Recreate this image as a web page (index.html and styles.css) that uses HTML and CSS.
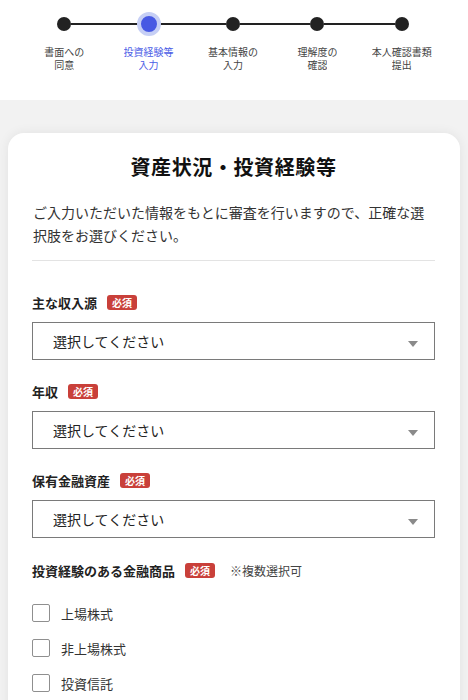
FILE: index.html
```html
<!DOCTYPE html>
<html lang="ja">
<head>
<meta charset="utf-8">
<title>資産状況・投資経験等</title>
<link rel="stylesheet" href="styles.css">
</head>
<body>
<header class="stepper">
  <div class="step">
    <div class="track"><span class="seg seg-none"></span><span class="dot"></span><span class="seg"></span></div>
    <div class="step-label"><span class="ln">書面への</span><span class="ln">同意</span></div>
  </div>
  <div class="step step-active">
    <div class="track"><span class="seg"></span><span class="dot"></span><span class="seg"></span></div>
    <div class="step-label"><span class="ln">投資経験等</span><span class="ln">入力</span></div>
  </div>
  <div class="step">
    <div class="track"><span class="seg"></span><span class="dot"></span><span class="seg"></span></div>
    <div class="step-label"><span class="ln">基本情報の</span><span class="ln">入力</span></div>
  </div>
  <div class="step">
    <div class="track"><span class="seg"></span><span class="dot"></span><span class="seg"></span></div>
    <div class="step-label"><span class="ln">理解度の</span><span class="ln">確認</span></div>
  </div>
  <div class="step">
    <div class="track"><span class="seg"></span><span class="dot"></span><span class="seg seg-none"></span></div>
    <div class="step-label"><span class="ln">本人確認書類</span><span class="ln">提出</span></div>
  </div>
</header>
<main class="page">
  <section class="card">
    <h1 class="title">資産状況・投資経験等</h1>
    <p class="lead">ご入力いただいた情報をもとに審査を行いますので、正確な選択肢をお選びください。</p>
    <hr class="divider">

    <div class="field">
      <div class="field-label">主な収入源<span class="badge">必須</span></div>
      <div class="select"><span>選択してください</span><span class="arrow"></span></div>
    </div>
    <div class="field">
      <div class="field-label">年収<span class="badge">必須</span></div>
      <div class="select"><span>選択してください</span><span class="arrow"></span></div>
    </div>
    <div class="field">
      <div class="field-label">保有金融資産<span class="badge">必須</span></div>
      <div class="select"><span>選択してください</span><span class="arrow"></span></div>
    </div>
    <div class="field field-check">
      <div class="field-label">投資経験のある金融商品<span class="badge">必須</span><span class="note">※複数選択可</span></div>
      <ul class="checks">
        <li class="check"><span class="box"></span>上場株式</li>
        <li class="check"><span class="box"></span>非上場株式</li>
        <li class="check"><span class="box"></span>投資信託</li>
      </ul>
    </div>
  </section>
</main>
</body>
</html>
```
FILE: styles.css
```css
* { box-sizing: border-box; }
html, body { margin: 0; padding: 0; }
body {
  font-family: "Noto Sans CJK JP", "Noto Sans", sans-serif;
  background: #f2f2f2;
  color: #222;
}
.stepper {
  background: #fff;
  height: 100px;
  padding: 12px 24px 0 22px;
  display: grid;
  grid-template-columns: repeat(5, 1fr);
}
.step { display: flex; flex-direction: column; align-items: stretch; }
.track {
  height: 24px;
  display: flex;
  align-items: center;
}
.seg { flex: 1; height: 2px; background: #222; }
.seg-none { background: transparent; }
.dot {
  width: 14px;
  height: 14px;
  border-radius: 50%;
  background: #222;
  flex: none;
}
.step-active .dot {
  width: 24px;
  height: 24px;
  background: #4759e3;
  border: 4px solid #c6cff5;
  margin: 0 -5px;
  position: relative;
}
.step-label {
  margin-top: 9px;
  display: flex;
  flex-direction: column;
  align-items: center;
  gap: 0;
  font-size: 10px;
  color: #444;
}
.step-label .ln {
  display: block;
  height: 13px;
  line-height: 13px;
  overflow: hidden;
  white-space: nowrap;
}
.step-active .step-label { color: #4a5de6; }

.page { padding: 33px 8px 0; }
.card {
  background: #fff;
  border-radius: 16px 16px 0 0;
  box-shadow: 0 0 12px rgba(0,0,0,0.07);
  padding: 20px 25px 40px 24px;
}
.title {
  margin: 0;
  font-size: 20px;
  line-height: 28px;
  font-weight: 700;
  text-align: center;
  letter-spacing: 0.6px;
  color: #111;
}
.lead {
  margin: 20px 0 0;
  font-size: 14px;
  line-height: 23px;
  color: #333;
  padding-left: 1px;
}
.divider {
  border: 0;
  height: 1px;
  background: #e3e3e3;
  margin: 13px 0 0;
}
.field { margin-top: 21px; }
.divider + .field { margin-top: 31px; }
.field-label {
  display: flex;
  align-items: center;
  height: 20px;
  font-size: 13px;
  font-weight: 700;
  color: #222;
}
.badge {
  display: inline-block;
  margin-left: 10px;
  width: 30px;
  height: 15px;
  line-height: 15px;
  border-radius: 3px;
  background: #c9403a;
  color: #fff;
  font-size: 10px;
  font-weight: 700;
  text-align: center;
}
.note {
  margin-left: 15px;
  font-size: 12px;
  font-weight: 400;
  color: #444;
}
.select {
  margin-top: 10px;
  height: 38px;
  border: 1px solid #7a7a7a;
  display: flex;
  align-items: center;
  justify-content: space-between;
  padding: 0 16px 0 20px;
  font-size: 14px;
  color: #222;
}
.arrow {
  width: 0;
  height: 0;
  border-left: 5px solid transparent;
  border-right: 5px solid transparent;
  border-top: 6px solid #8a8a8a;
  margin-top: 6px;
}
.field-check { margin-top: 22px; }
.checks {
  list-style: none;
  margin: 24px 0 0;
  padding: 0;
  display: flex;
  flex-direction: column;
  gap: 17px;
}
.check {
  display: flex;
  align-items: center;
  height: 18px;
  font-size: 13px;
  color: #333;
}
.box {
  width: 18px;
  height: 18px;
  border: 1px solid #8f8f8f;
  border-radius: 2px;
  margin-right: 11px;
  flex: none;
}
```
